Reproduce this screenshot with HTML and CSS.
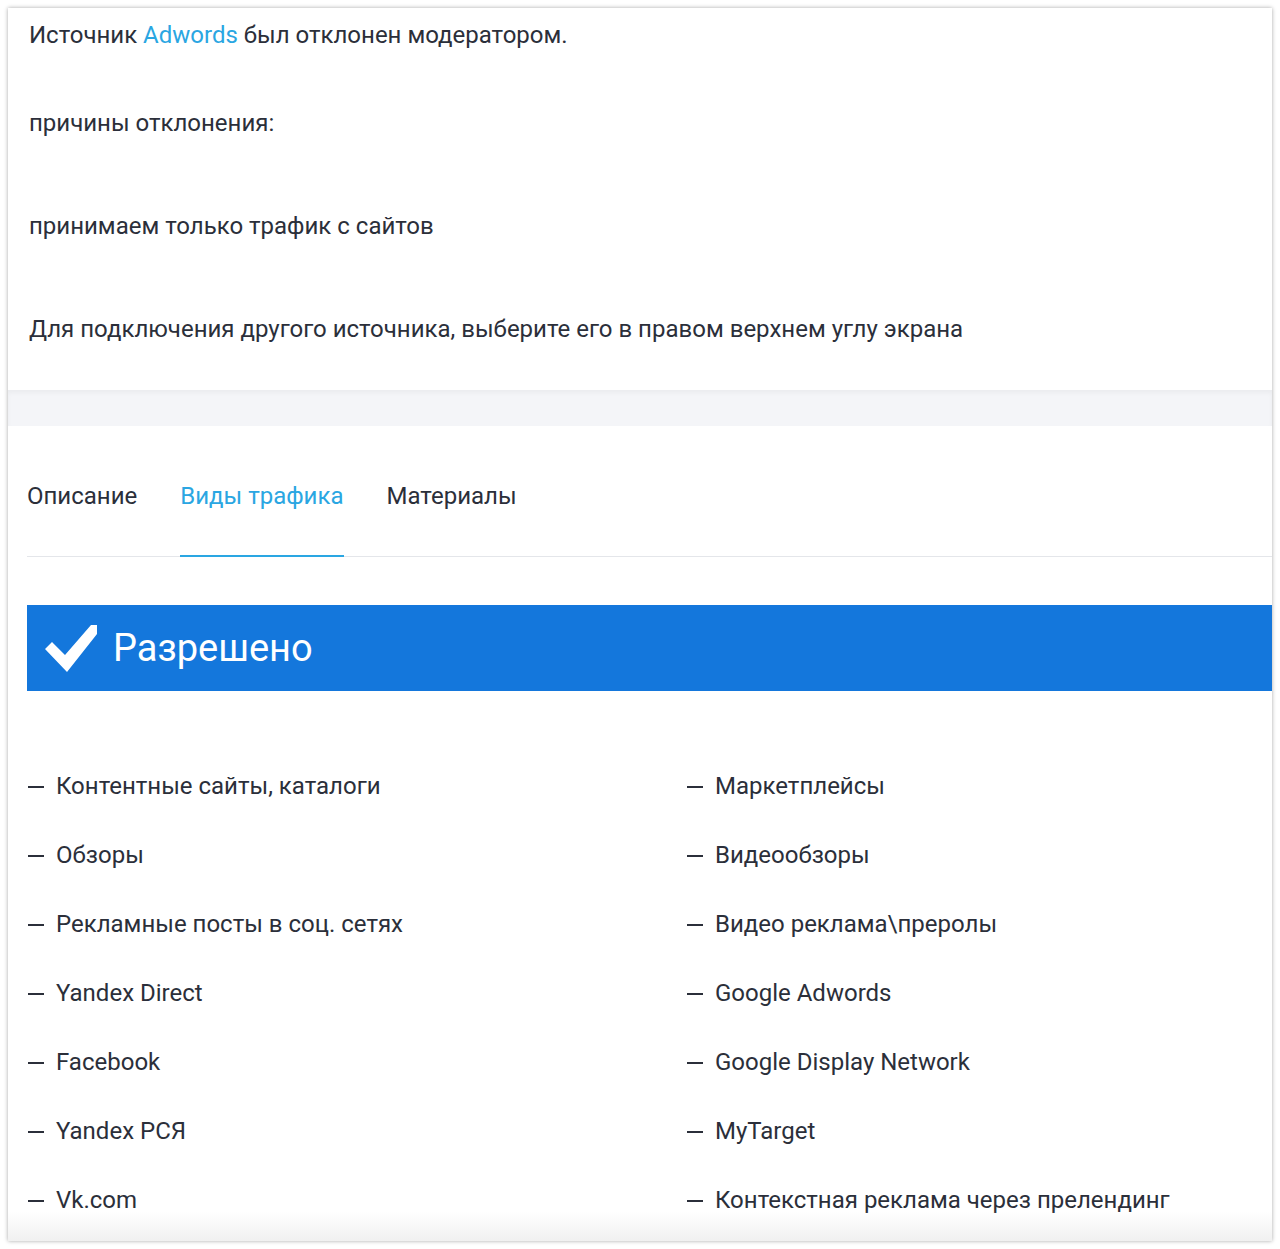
FILE: index.html
```html
<!DOCTYPE html>
<html lang="ru">
<head>
    <meta charset="UTF-8">
    <meta name="viewport" content="width=device-width, initial-scale=1.0">
    <title>Источник отклонен</title>
    <link rel="stylesheet" href="styles.css">
</head>
<body>

<div class="card">

    <!-- сообщение модератора -->
    <div class="notice">
        <p class="first">Источник <a href="#">Adwords</a> был отклонен модератором.</p>
        <p>причины отклонения:</p>
        <p>принимаем только трафик с сайтов</p>
        <p>Для подключения другого источника, выберите его в правом верхнем углу экрана</p>
    </div>

    <div class="divider"></div>

    <div class="offer">
        <!-- вкладки -->
        <ul class="tabs">
            <li>Описание</li>
            <li class="active">Виды трафика</li>
            <li>Материалы</li>
        </ul>

        <div class="banner">
            <svg class="check" width="52" height="48" viewBox="0 0 52 48">
                <polygon points="0,25 7,18 20,31 46,1 52,1 52,10 22,48" fill="#fff"/>
            </svg>
            <span>Разрешено</span>
        </div>

        <ul class="traffic">
            <li>Контентные сайты, каталоги</li>
            <li>Маркетплейсы</li>
            <li>Обзоры</li>
            <li>Видеообзоры</li>
            <li>Рекламные посты в соц. сетях</li>
            <li>Видео реклама\преролы</li>
            <li>Yandex Direct</li>
            <li>Google Adwords</li>
            <li>Facebook</li>
            <li>Google Display Network</li>
            <li>Yandex РСЯ</li>
            <li>MyTarget</li>
            <li>Vk.com</li>
            <li>Контекстная реклама через прелендинг</li>
        </ul>
    </div>

</div>

</body>
</html>
```

FILE: styles.css
```css
body {
    margin: 0;
    padding: 8px;
    background-color: #fff;
    font-family: Roboto, "Noto Sans", sans-serif;
    color: #2b2f3a;
}

.card {
    position: relative;
    height: 1233px;
    overflow: hidden;
    background-color: #fff;
    box-shadow: 0 0 4px rgba(0, 0, 0, 0.35);
}

/* лёгкое затемнение внизу карточки */
.card::after {
    content: "";
    position: absolute;
    left: 0;
    right: 0;
    bottom: 0;
    height: 30px;
    background: linear-gradient(rgba(240, 240, 240, 0), #f0f0f0);
}

/* Сообщение */
.notice {
    padding: 10px 20px 44px 21px;
    font-size: 24px;
    line-height: 34px;
}

.notice p {
    margin: 69px 0 0;
}

.notice p.first {
    margin-top: 0;
}

.notice p:nth-child(2) {
    margin-top: 54px;
}

.notice a {
    color: #2aa6e2;
    text-decoration: none;
}

.divider {
    height: 36px;
    background-color: #f4f5f8;
    box-shadow: inset 0 3px 4px rgba(0, 0, 0, 0.04);
}

/* Вкладки */
.offer {
    padding-left: 19px;
}

.tabs {
    display: flex;
    list-style: none;
    margin: 0;
    padding: 53px 0 0;
    border-bottom: 1px solid #e4e6ea;
    font-size: 24px;
    line-height: 34px;
}

.tabs li {
    margin-right: 43px;
    padding-bottom: 42px;
    margin-bottom: -1px;
    border-bottom: 2px solid transparent;
}

.tabs li.active {
    color: #2aa6e2;
    border-bottom-color: #2aa6e2;
}

/* Разрешено */
.banner {
    display: flex;
    align-items: center;
    height: 86px;
    margin-top: 48px;
    padding-left: 18px;
    background-color: #1477dc;
    color: #fff;
    font-size: 38px;
}

.banner .check {
    margin-right: 16px;
}

/* Виды трафика */
.traffic {
    display: grid;
    grid-template-columns: 659px 1fr;
    list-style: none;
    margin: 61px 0 0;
    padding: 0;
    font-size: 24px;
    line-height: 69px;
}

.traffic li {
    display: flex;
    align-items: center;
}

.traffic li::before {
    content: "";
    width: 16px;
    height: 2px;
    margin: 0 12px 0 1px;
    background-color: #2b2f3a;
}
```
